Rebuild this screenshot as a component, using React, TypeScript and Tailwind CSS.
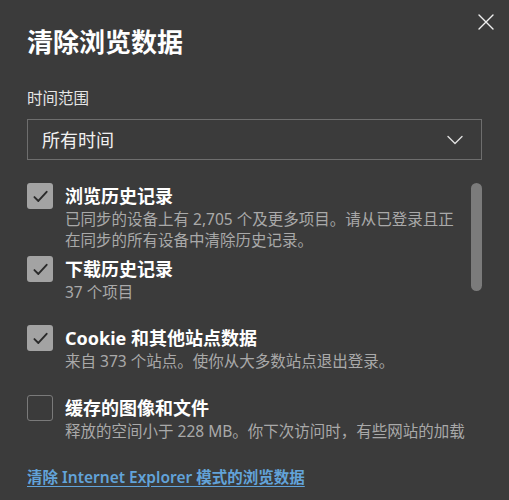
import React from "react";

const font = { fontFamily: '"Noto Sans", "Noto Sans CJK SC", sans-serif' };

function Check({ checked }: { checked: boolean }) {
  if (!checked) {
    return <div className="w-[26px] h-[26px] shrink-0 rounded-[3px] border-[1.5px] border-[#7a7a7a]" />;
  }
  return (
    <div className="w-[26px] h-[26px] shrink-0 rounded-[3px] bg-[#a3a3a3] flex items-center justify-center">
      <svg width="17" height="17" viewBox="0 0 16 16" fill="none">
        <path d="M2.3 8.6 L6 12.2 L13.8 3.6" stroke="#2a2a2a" strokeWidth="1.8" strokeLinecap="round" strokeLinejoin="round" />
      </svg>
    </div>
  );
}

function Item({
  checked,
  label,
  lines,
  className,
}: {
  checked: boolean;
  label: string;
  lines: string[];
  className?: string;
}) {
  return (
    <div className={"flex gap-[12px] " + (className ?? "")}>
      <Check checked={checked} />
      <div className="flex flex-col">
        <div className="text-[18px] font-bold leading-[26px] text-white whitespace-nowrap">{label}</div>
        {lines.map((l, i) => (
          <div key={i} className="text-[15.5px] leading-[21px] text-[#a9a9a9] whitespace-nowrap">
            {l}
          </div>
        ))}
      </div>
    </div>
  );
}

export default function App() {
  return (
    <div style={font} className="relative w-[509px] h-[500px] bg-[#3b3b3b] overflow-hidden px-[27px] pt-[25px]">
      <button className="absolute top-[13px] right-[14px] w-[18px] h-[18px] flex items-center justify-center">
        <svg width="16" height="16" viewBox="0 0 16 16" fill="none">
          <path d="M1 1 L15 15 M15 1 L1 15" stroke="#f0f0f0" strokeWidth="1.4" strokeLinecap="round" />
        </svg>
      </button>

      <h1 className="text-[26px] font-bold leading-[34px] text-white">清除浏览数据</h1>

      <div className="mt-[29px] text-[15.5px] leading-[20px] text-[#e6e6e6]">时间范围</div>

      <div className="mt-[11px] h-[41px] w-[455px] border border-[#6e6e6e] flex items-center justify-between pl-[14px] pr-[18px]">
        <span className="text-[18px] leading-[24px] text-[#f0f0f0]">所有时间</span>
        <svg width="16" height="10" viewBox="0 0 16 10" fill="none">
          <path d="M1 1.5 L8 8.5 L15 1.5" stroke="#e0e0e0" strokeWidth="1.4" strokeLinecap="round" strokeLinejoin="round" />
        </svg>
      </div>

      <div className="mt-[23px] flex h-[264px] w-[455px]">
        <div className="flex-1 overflow-hidden flex flex-col">
          <Item
            checked
            label="浏览历史记录"
            lines={["已同步的设备上有 2,705 个及更多项目。请从已登录且正", "在同步的所有设备中清除历史记录。"]}
          />
          <Item checked label="下载历史记录" lines={["37 个项目"]} className="mt-[5px]" />
          <Item
            checked
            label="Cookie 和其他站点数据"
            lines={["来自 373 个站点。使你从大多数站点退出登录。"]}
            className="mt-[22px]"
          />
          <Item
            checked={false}
            label="缓存的图像和文件"
            lines={["释放的空间小于 228 MB。你下次访问时，有些网站的加载"]}
            className="mt-[23px]"
          />
        </div>
        <div className="w-[11px] shrink-0">
          <div className="w-[11px] h-[108px] rounded-full bg-[#7b7b7b]" />
        </div>
      </div>

      <a className="mt-[20px] block w-fit text-[15.5px] font-semibold leading-[20px] text-[#62a3d9] underline underline-offset-[3px] decoration-1">
        清除 Internet Explorer 模式的浏览数据
      </a>
    </div>
  );
}
